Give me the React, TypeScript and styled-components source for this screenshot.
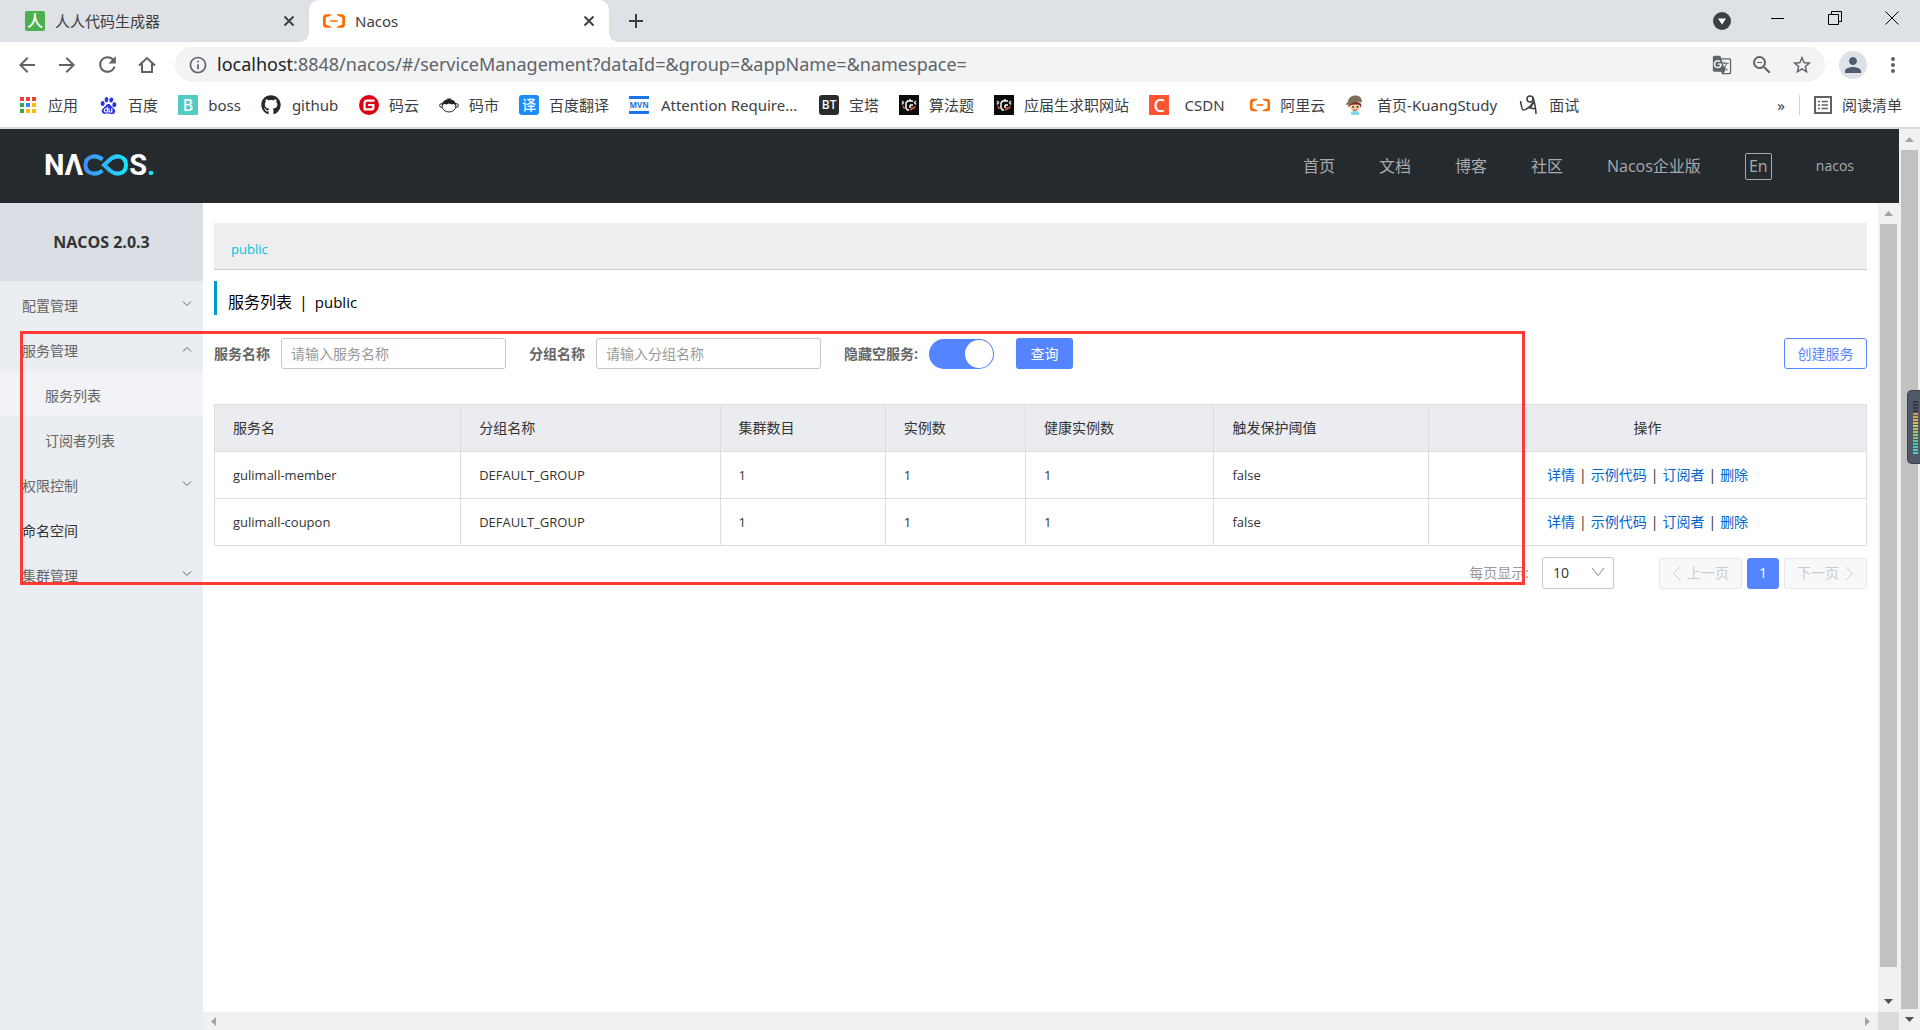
import React, { useState } from "react";
import styled, { createGlobalStyle } from "styled-components";
import {
  MdArrowBack, MdArrowForward, MdRefresh, MdInfoOutline, MdGTranslate,
  MdZoomOut, MdStarBorder, MdPerson, MdMoreVert,
} from "react-icons/md";
import { SiBaidu, SiGitee, SiAlibabacloud } from "react-icons/si";
import { FaGithub } from "react-icons/fa";

const chromeFont = `"Noto Sans", "Noto Sans CJK SC", sans-serif`;
const pageFont = `"Open Sans", "Noto Sans CJK SC", sans-serif`;

const GlobalStyle = createGlobalStyle`
  * { box-sizing: border-box; }
  body { margin: 0; background: #fff; overflow: hidden; }
  button, input, select { font: inherit; margin: 0; }
  button { border: 0; padding: 0; background: none; color: inherit; cursor: pointer; }
  a { text-decoration: none; color: inherit; }
  svg { display: block; flex: none; }
`;

const Window = styled.div`
  position: relative;
  display: flex;
  flex-direction: column;
  height: 100vh;
  font-family: ${pageFont};
`;

/* ---------- browser frame ---------- */

const TabStrip = styled.div`
  display: flex;
  height: 42px;
  background: #dee1e6;
  font: 15px/20px ${chromeFont};
  color: #3c4043;
`;

const Tab = styled.div<{ $active?: boolean }>`
  position: relative;
  display: flex;
  align-items: center;
  gap: 10px;
  width: ${(p) => (p.$active ? 300 : 309)}px;
  padding: 0 13px 0 ${(p) => (p.$active ? 14 : 25)}px;
  background: ${(p) => (p.$active ? "#fff" : "transparent")};
  border-radius: 10px 10px 0 0;
  ${(p) => p.$active && `
    &::before, &::after {
      content: "";
      position: absolute;
      bottom: 0;
      width: 10px;
      height: 10px;
    }
    &::before { left: -10px; background: radial-gradient(circle at 0 0, transparent 10px, #fff 10px); }
    &::after { right: -10px; background: radial-gradient(circle at 100% 0, transparent 10px, #fff 10px); }
  `}
`;

const TabTitle = styled.span`
  flex: 1;
`;

const StripButton = styled.button<{ $w: number }>`
  display: flex;
  align-items: center;
  justify-content: center;
  width: ${(p) => p.$w}px;
`;

const TabClose = styled(StripButton)`
  height: 14px;
`;

const WindowButtons = styled.div`
  display: flex;
  height: 36px;
  margin-left: 7px;
`;

const Spacer = styled.div`
  flex: 1;
`;

const Toolbar = styled.div`
  display: flex;
  align-items: center;
  height: 45px;
  padding: 0 7px;
  color: #5f6368;
`;

const ToolButton = styled.button`
  display: flex;
  align-items: center;
  justify-content: center;
  width: 40px;
  height: 35px;
`;

const AddressBar = styled.div`
  display: flex;
  flex: 1;
  align-items: center;
  height: 35px;
  margin: 0 8px;
  padding: 0 3px 0 13px;
  border-radius: 18px;
  background: #f1f3f4;
`;

const Url = styled.div`
  flex: 1;
  margin-left: 9px;
  padding-bottom: 2px;
  font: 18px/24px ${chromeFont};
  white-space: nowrap;
  b { font-weight: 400; color: #202124; }
`;

const Avatar = styled.span`
  display: flex;
  align-items: center;
  justify-content: center;
  width: 28px;
  height: 28px;
  border-radius: 50%;
  background: #dee1e6;
  color: #4f5b6e;
`;

const BookmarkBar = styled.div`
  display: flex;
  align-items: center;
  gap: 20px;
  height: 42px;
  padding: 0 18px 4px;
  border-bottom: 2px solid #dadce0;
  font: 15px/20px ${chromeFont};
  color: #3c4043;
  white-space: nowrap;
`;

const Bookmark = styled.a`
  display: flex;
  align-items: center;
  gap: 10px;
`;

const BookmarkName = styled.span<{ $w?: number }>`
  min-width: ${(p) => p.$w ?? 0}px;
  text-align: center;
`;

const IconSlot = styled.span`
  display: flex;
  align-items: center;
  justify-content: center;
  width: 20px;
  height: 20px;
`;

const LetterIcon = styled.span<{ $bg: string; $size?: number; $round?: number }>`
  display: flex;
  align-items: center;
  justify-content: center;
  width: 20px;
  height: 20px;
  border-radius: ${(p) => p.$round ?? 0}px;
  background: ${(p) => p.$bg};
  color: #fff;
  font-size: ${(p) => p.$size ?? 15}px;
  font-weight: 500;
  line-height: 20px;
`;

const MvnIcon = styled.span`
  width: 20px;
  border: solid #1a73e8;
  border-width: 3px 0;
  color: #1a73e8;
  font-size: 8px;
  font-weight: 700;
  line-height: 12px;
  text-align: center;
`;

const BarEnd = styled.div`
  display: flex;
  align-items: center;
  gap: 14px;
  color: #3c4043;
`;

const Divider = styled.span`
  width: 1px;
  height: 20px;
  background: #cfd1d4;
`;

const ReadingList = styled.button`
  display: flex;
  align-items: center;
  gap: 10px;
`;

/* ---------- scroll bars ---------- */

const ScrollColumn = styled.div`
  display: flex;
  flex-direction: column;
  flex: none;
  width: 21px;
  background: #f1f1f1;
`;

const ScrollArrow = styled.span`
  display: flex;
  align-items: center;
  justify-content: center;
  width: 21px;
  height: 21px;
`;

const ScrollThumb = styled.div<{ $rest?: number }>`
  flex: 1;
  margin: 0 2px ${(p) => p.$rest ?? 0}px;
  background: #c1c1c1;
`;

const ScrollCorner = styled.div`
  height: 18px;
  background: #dcdcdc;
`;

const ScrollRow = styled.div`
  display: flex;
  align-items: center;
  justify-content: space-between;
  height: 18px;
  background: #f1f1f1;
`;

/* ---------- nacos console ---------- */

const Viewport = styled.div`
  display: flex;
  flex: 1;
  min-height: 0;
`;

const Site = styled.div`
  display: flex;
  flex-direction: column;
  flex: 1;
  min-width: 0;
`;

const Header = styled.header`
  display: flex;
  align-items: center;
  justify-content: space-between;
  height: 74px;
  padding: 0 45px 0 44px;
  background: #252a2f;
`;

const Logo = styled.a`
  display: flex;
  align-items: center;
  padding-bottom: 2px;
  color: #fff;
  font: 700 29px/30px Roboto, sans-serif;
`;

const LogoDot = styled.span`
  color: #1be1f6;
`;

const TopNav = styled.nav`
  display: flex;
  align-items: center;
  gap: 44px;
  color: #a8aaac;
  font-size: 16px;
  line-height: 24px;
`;

const LangButton = styled.button`
  width: 27px;
  height: 27px;
  border: 1px solid #a8aaac;
  border-radius: 2px;
  line-height: 24px;
`;

const UserLink = styled.a`
  font-size: 14px;
`;

const Body = styled.div`
  display: flex;
  flex: 1;
  min-height: 0;
`;

const Sidebar = styled.aside`
  width: 203px;
  flex: none;
  background: #eaedf1;
  font-size: 14px;
  line-height: 20px;
`;

const Brand = styled.h1`
  display: flex;
  align-items: center;
  justify-content: center;
  height: 78px;
  margin: 0;
  background: #d9dde4;
  color: #333;
  font-size: 16px;
  font-weight: 700;
`;

const MenuItem = styled.a<{ $child?: boolean; $active?: boolean; $dark?: boolean }>`
  display: flex;
  align-items: center;
  justify-content: space-between;
  height: 45px;
  padding: 4px 11px 0 ${(p) => (p.$child ? 45 : 22)}px;
  background: ${(p) => (p.$active ? "#f1f3f7" : "transparent")};
  color: ${(p) => (p.$dark ? "#333" : "#666")};
  svg { margin-bottom: 4px; }
`;

const ContentColumn = styled.div`
  display: flex;
  flex-direction: column;
  flex: 1;
  min-width: 0;
`;

const Content = styled.main`
  flex: 1;
  padding: 20px 11px 0;
  font-size: 14px;
  line-height: 20px;
  color: #333;
`;

const NamespaceBar = styled.div`
  display: flex;
  align-items: center;
  height: 47px;
  padding: 5px 17px 0;
  border-bottom: 1px solid #ccc;
  background: #eee;
  color: #00c1de;
  font-size: 13px;
`;

const PageTitle = styled.h2`
  display: flex;
  align-items: center;
  gap: 7px;
  height: 34px;
  margin: 11px 0 23px;
  padding: 8px 0 0 11px;
  border-left: 3px solid #09c;
  color: #000;
  font-size: 16px;
  font-weight: 400;
`;

const TitleNamespace = styled.span`
  font-size: 15px;
`;

const SearchForm = styled.form`
  display: flex;
  align-items: center;
  height: 31px;
  margin-bottom: 35px;
`;

const Label = styled.label`
  margin-right: 11px;
  color: #666;
  font-weight: 700;
`;

const TextInput = styled.input`
  width: 225px;
  height: 31px;
  margin-right: 23px;
  padding: 0 9px;
  border: 1px solid #c4c6cf;
  border-radius: 3px;
  outline: 0;
  &::placeholder { color: #999; opacity: 1; }
`;

const Switch = styled.input`
  appearance: none;
  display: flex;
  justify-content: flex-end;
  width: 65px;
  height: 30px;
  margin-right: 22px;
  padding: 1px;
  border-radius: 15px;
  background: #c4c6cf;
  &::before {
    content: "";
    width: 28px;
    height: 28px;
    margin-right: 35px;
    border-radius: 50%;
    background: #fff;
  }
  &:checked { background: #5584ff; }
  &:checked::before { margin-right: 0; }
`;

const PrimaryButton = styled.button`
  width: 57px;
  height: 31px;
  border-radius: 3px;
  background: #5584ff;
  color: #fff;
`;

const OutlineButton = styled.button`
  width: 83px;
  height: 31px;
  margin-left: auto;
  border: 1px solid #5584ff;
  border-radius: 3px;
  color: #5584ff;
`;

const Table = styled.table`
  width: 100%;
  table-layout: fixed;
  border-collapse: collapse;
`;

const Cell = styled.td<{ $center?: boolean }>`
  height: 47px;
  padding: 0 18px;
  border: 1px solid #dcdee3;
  font-size: ${(p) => (p.$center ? 14 : 13)}px;
  text-align: ${(p) => (p.$center ? "center" : "left")};
`;

const HeadCell = styled(Cell)`
  background: #ebecf0;
  font-size: 14px;
  font-weight: 400;
`;

const ActionLink = styled.a`
  color: #06c;
`;

const Separator = styled.span`
  margin: 0 4px;
`;

const Pager = styled.div`
  display: flex;
  align-items: center;
  justify-content: flex-end;
  gap: 5px;
  margin-top: 11px;
  label { color: #999; margin-right: 8px; }
`;

const SelectBox = styled.span`
  position: relative;
  margin-right: 40px;
  svg { position: absolute; right: 9px; top: 10px; pointer-events: none; }
`;

const Select = styled.select`
  display: block;
  appearance: none;
  width: 72px;
  height: 32px;
  padding: 0 10px;
  border: 1px solid #c4c6cf;
  border-radius: 3px;
  background: #fff;
  color: #333;
`;

const PageButton = styled.button<{ $current?: boolean }>`
  display: flex;
  align-items: center;
  justify-content: center;
  gap: 6px;
  width: ${(p) => (p.$current ? 32 : 83)}px;
  height: 31px;
  border: 1px solid ${(p) => (p.$current ? "#5584ff" : "#e6e7eb")};
  border-radius: 3px;
  background: ${(p) => (p.$current ? "#5584ff" : "#f7f8fa")};
  color: ${(p) => (p.$current ? "#fff" : "#ccc")};
`;

/* ---------- overlays ---------- */

const Highlight = styled.div`
  position: absolute;
  left: 20px;
  top: 331px;
  width: 1505px;
  height: 254px;
  border: 3px solid #ff3a35;
  pointer-events: none;
`;

const Meter = styled.div`
  position: absolute;
  right: 0;
  top: 390px;
  display: flex;
  flex-direction: column;
  justify-content: center;
  gap: 1px;
  width: 13px;
  height: 74px;
  padding-left: 5px;
  border: 1px solid #3a3f4a;
  border-right: 0;
  border-radius: 5px 0 0 5px;
  background: #50586a;
`;

const MeterBar = styled.span<{ $color: string }>`
  width: 5px;
  height: 2px;
  background: ${(p) => p.$color};
`;

/* ---------- icons ---------- */

const Stroke = ({ w, h, d, sw = 1, color = "currentColor" }: { w: number; h: number; d: string; sw?: number; color?: string }) => (
  <svg width={w} height={h} viewBox={`0 0 ${w} ${h}`} fill="none" stroke={color} strokeWidth={sw}>
    <path d={d} />
  </svg>
);

const Cross = () => <Stroke w={12} h={12} sw={2} d="M1.5 1.5l9 9M10.5 1.5l-9 9" />;

const Triangle = ({ dir, color }: { dir: "up" | "down" | "left" | "right"; color: string }) => {
  const points = { up: "0,7 4.5,2 9,7", down: "0,2 4.5,7 9,2", left: "7,0 2,4.5 7,9", right: "2,0 7,4.5 2,9" }[dir];
  return <svg width="9" height="9"><polygon points={points} fill={color} /></svg>;
};

const AppsIcon = () => {
  const colors = ["#ea4335", "#ea4335", "#ea4335", "#34a853", "#4285f4", "#fbbc05", "#34a853", "#fbbc05", "#fbbc05"];
  return (
    <svg width="18" height="18">
      {colors.map((c, i) => <rect key={i} x={(i % 3) * 6 + 1} y={Math.floor(i / 3) * 6 + 1} width="4" height="4" fill={c} />)}
    </svg>
  );
};

const MonkeyIcon = () => (
  <svg width="20" height="20" viewBox="0 0 20 20">
    <circle cx="2.4" cy="10.500" r="1.8" fill="#fff" stroke="#222" />
    <circle cx="17.6" cy="10.500" r="1.8" fill="#fff" stroke="#222" />
    <ellipse cx="10" cy="11" rx="7" ry="6" fill="#fff" stroke="#222" />
    <path d="M3 11C3 6.500 6 4.600 9 4.600L8 3l2.400.8L12 2.600l-.6 2C15 5 17 7 17 11c-1-2-3-2.600-4.500-1.500L10 8.500 7.500 9.500C6 8.400 4 9 3 11z" fill="#222" />
  </svg>
);

const CodeIcon = () => (
  <svg width="20" height="20" viewBox="0 0 20 20" fill="none" strokeWidth="1.5">
    <rect width="20" height="20" fill="#0b0b0b" />
    <path d="M14 6H8.500L7 8v5l1.500 2H10" stroke="#fff" />
    <path d="M11 4v2M11 10h3M11 10v3" stroke="#fff" />
    <path d="M3 6l1.500 1.500L3 9.500M17 6l-1.500 1.500L17 9.500" stroke="#ddd" />
    <path d="M4 11l1.500 3M16 11l-1.500 3M13 12v2l-2 1" stroke="#e2664a" />
  </svg>
);

const BoyIcon = () => (
  <svg width="20" height="20" viewBox="0 0 20 20">
    <path d="M6 20v-3l2.500-1.500h3L14 17v3z" fill="#7fdcf0" />
    <circle cx="10" cy="11.500" r="5" fill="#f6c7a4" />
    <path d="M3.500 12.500C3 9 4 7 10 7s7 2 6 6l-1.500-3C12 9.500 8 9 5.500 10z" fill="#7a2f22" />
    <path d="M3 7c0-4 3.500-6.500 7.500-6.500S17 3 17 7.500C13 6 9 7 6 9L1 10C1 8 2 7.500 3 7z" fill="#7d6f5a" />
    <path d="M8 14.500c1 1 3 1 4 0" stroke="#c0392b" fill="none" />
    <circle cx="8" cy="12" r=".9" fill="#333" /><circle cx="12.500" cy="12" r=".9" fill="#333" />
  </svg>
);

const SketchIcon = () => (
  <svg width="20" height="20" viewBox="0 0 20 20" fill="none" stroke="#3c3c3c" strokeWidth="1.5">
    <path d="M1.500 6c1 5 1 9 3 9s7-3 10-8" />
    <circle cx="11" cy="4" r="3" />
    <path d="M14 2c1 4 3 10 3 17M17 14l-6-1 4-6" />
  </svg>
);

const ListIcon = () => (
  <svg width="18" height="18" viewBox="0 0 18 18" fill="none" stroke="#5f6368" strokeWidth="2">
    <path d="M1 1h16v16H1z" />
    <path strokeWidth="1.5" d="M4 5.500h2M4 9h2M4 12.500h2M7.500 5.500H14M7.500 9H14M7.500 12.500H14" />
  </svg>
);

const InfinityLogo = () => (
  <svg width="46" height="22" viewBox="0 0 46 22" fill="none" strokeWidth="4">
    <defs>
      <linearGradient id="loop" gradientUnits="userSpaceOnUse" x1="0" y1="0" x2="46" y2="0">
        <stop offset="0" stopColor="#4289fd" />
        <stop offset="1" stopColor="#17eaf8" />
      </linearGradient>
    </defs>
    <path stroke="url(#loop)" d="M19.500 16.500C13 22 2.500 20 2.500 11S13 0 19.500 5.500M21 11l6-5.500C33.500 0 43 2 43 11s-9.500 11-16 5.500z" />
  </svg>
);

/* ---------- data ---------- */

const bookmarks: { name: string; icon: React.ReactNode; width?: number }[] = [
  { name: "应用", icon: <IconSlot><AppsIcon /></IconSlot> },
  { name: "百度", icon: <IconSlot><SiBaidu size={17} color="#2932e1" /></IconSlot> },
  { name: "boss", icon: <LetterIcon $bg="#53cac3" $size={16}>B</LetterIcon>, width: 33 },
  { name: "github", icon: <FaGithub size={20} color="#24292e" />, width: 48 },
  { name: "码云", icon: <SiGitee size={20} color="#dd0011" /> },
  { name: "码市", icon: <MonkeyIcon /> },
  { name: "百度翻译", icon: <LetterIcon $bg="#1a8cff" $round={3} $size={14}>译</LetterIcon> },
  { name: "Attention Require...", icon: <MvnIcon>MVN</MvnIcon>, width: 140 },
  { name: "宝塔", icon: <LetterIcon $bg="#2b2b2b" $round={3} $size={12}>BT</LetterIcon> },
  { name: "算法题", icon: <CodeIcon /> },
  { name: "应届生求职网站", icon: <CodeIcon /> },
  { name: "CSDN", icon: <LetterIcon $bg="#fc5531" $size={18}>C</LetterIcon>, width: 51 },
  { name: "阿里云", icon: <SiAlibabacloud size={20} color="#ff6a00" /> },
  { name: "首页-KuangStudy", icon: <BoyIcon />, width: 124 },
  { name: "面试", icon: <SketchIcon /> },
];

const menu: { name: string; arrow?: "up" | "down"; child?: boolean; active?: boolean; dark?: boolean }[] = [
  { name: "配置管理", arrow: "down" },
  { name: "服务管理", arrow: "up" },
  { name: "服务列表", child: true, active: true },
  { name: "订阅者列表", child: true },
  { name: "权限控制", arrow: "down" },
  { name: "命名空间", dark: true },
  { name: "集群管理", arrow: "down" },
];

const columns: [string, string][] = [
  ["服务名", "14.9%"], ["分组名称", "15.7%"], ["集群数目", "10%"], ["实例数", "8.5%"],
  ["健康实例数", "11.4%"], ["触发保护阈值", "13%"],
];

const services = [
  ["gulimall-member", "DEFAULT_GROUP", "1", "1", "1", "false"],
  ["gulimall-coupon", "DEFAULT_GROUP", "1", "1", "1", "false"],
];

const actions = ["详情", "示例代码", "订阅者", "删除"];

const meterColors = [
  "#343a45", "#343a45", "#343a45", "#343a45", "#e0913f", "#dfa04a", "#d9b04c", "#d6c04e", "#cfc956", "#bcc95c",
  "#a9c964", "#93c76c", "#7dc678", "#66c58a", "#52c79e", "#48cbb0", "#45d0c0", "#45d0c0",
];

export default function App() {
  const [hideEmpty, setHideEmpty] = useState(true);

  return (
    <Window>
      <GlobalStyle />
      <TabStrip>
        <Tab>
          <LetterIcon $bg="#4caf50" $round={2} $size={16}>人</LetterIcon>
          <TabTitle>人人代码生成器</TabTitle>
          <TabClose $w={14} aria-label="close tab"><Cross /></TabClose>
        </Tab>
        <Tab $active>
          <SiAlibabacloud size={22} color="#ff6a00" />
          <TabTitle>Nacos</TabTitle>
          <TabClose $w={14} aria-label="close tab"><Cross /></TabClose>
        </Tab>
        <StripButton $w={54} aria-label="new tab"><Stroke w={14} h={14} sw={2} d="M7 0v14M0 7h14" /></StripButton>
        <Spacer />
        <StripButton $w={40} aria-label="tab search">
          <svg width="18" height="18"><circle cx="9" cy="9" r="9" fill="#3c4043" /><path d="M5 6.500h8L9 12.500z" fill="#fff" /></svg>
        </StripButton>
        <WindowButtons>
          <StripButton $w={57} aria-label="minimize"><Stroke w={13} h={13} d="M0 6.500h13" color="#000" /></StripButton>
          <StripButton $w={57} aria-label="restore"><Stroke w={14} h={14} d="M.5 3.500h10v10H.5zM3.500 3V.5h10v10H11" color="#000" /></StripButton>
          <StripButton $w={57} aria-label="close"><Stroke w={14} h={14} d="M.5.5l13 13M13.500.5l-13 13" color="#000" /></StripButton>
        </WindowButtons>
      </TabStrip>
      <Toolbar>
        <ToolButton aria-label="back"><MdArrowBack size={24} /></ToolButton>
        <ToolButton aria-label="forward"><MdArrowForward size={24} /></ToolButton>
        <ToolButton aria-label="reload"><MdRefresh size={25} /></ToolButton>
        <ToolButton aria-label="home"><Stroke w={18} h={18} sw={2} d="M1 9.500L9 2l8 7.500M4 7.500V16h10V7.500" /></ToolButton>
        <AddressBar>
          <MdInfoOutline size={20} />
          <Url><b>localhost</b>:8848/nacos/#/serviceManagement?dataId=&amp;group=&amp;appName=&amp;namespace=</Url>
          <ToolButton aria-label="translate"><MdGTranslate size={20} /></ToolButton>
          <ToolButton aria-label="zoom"><MdZoomOut size={24} /></ToolButton>
          <ToolButton aria-label="bookmark"><MdStarBorder size={22} /></ToolButton>
        </AddressBar>
        <ToolButton aria-label="profile"><Avatar><MdPerson size={24} /></Avatar></ToolButton>
        <ToolButton aria-label="menu"><MdMoreVert size={24} /></ToolButton>
      </Toolbar>
      <BookmarkBar>
        {bookmarks.map((b) => (
          <Bookmark href="#" key={b.name}>{b.icon}<BookmarkName $w={b.width}>{b.name}</BookmarkName></Bookmark>
        ))}
        <Spacer />
        <BarEnd>
          <button>»</button>
          <Divider />
          <ReadingList><ListIcon />阅读清单</ReadingList>
        </BarEnd>
      </BookmarkBar>

      <Viewport>
        <Site>
          <Header>
            <Logo href="#" aria-label="NACOS"><span>N</span><span>Λ</span><InfinityLogo /><span>S</span><LogoDot>.</LogoDot></Logo>
            <TopNav>
              <a href="#">首页</a>
              <a href="#">文档</a>
              <a href="#">博客</a>
              <a href="#">社区</a>
              <a href="#">Nacos企业版</a>
              <LangButton>En</LangButton>
              <UserLink href="#">nacos</UserLink>
            </TopNav>
          </Header>
          <Body>
            <Sidebar>
              <Brand>NACOS 2.0.3</Brand>
              {menu.map((m) => (
                <MenuItem href="#" key={m.name} $child={m.child} $active={m.active} $dark={m.dark}>
                  {m.name}
                  {m.arrow && <Stroke w={10} h={6} d={m.arrow === "down" ? "M1 .5l4 4 4-4" : "M1 5.500l4-4 4 4"} />}
                </MenuItem>
              ))}
            </Sidebar>
            <ContentColumn>
              <Content>
                <NamespaceBar><a href="#">public</a></NamespaceBar>
                <PageTitle>服务列表<span>|</span><TitleNamespace>public</TitleNamespace></PageTitle>
                <SearchForm onSubmit={(e) => e.preventDefault()}>
                  <Label htmlFor="service">服务名称</Label>
                  <TextInput id="service" placeholder="请输入服务名称" />
                  <Label htmlFor="group">分组名称</Label>
                  <TextInput id="group" placeholder="请输入分组名称" />
                  <Label htmlFor="hide">隐藏空服务:</Label>
                  <Switch id="hide" type="checkbox" checked={hideEmpty} onChange={(e) => setHideEmpty(e.target.checked)} />
                  <PrimaryButton type="submit">查询</PrimaryButton>
                  <OutlineButton type="button">创建服务</OutlineButton>
                </SearchForm>
                <Table>
                  <colgroup>
                    {columns.map(([name, width]) => <col key={name} style={{ width }} />)}
                    <col />
                  </colgroup>
                  <thead>
                    <tr>
                      {columns.map(([name]) => <HeadCell as="th" key={name}>{name}</HeadCell>)}
                      <HeadCell as="th" $center>操作</HeadCell>
                    </tr>
                  </thead>
                  <tbody>
                    {services.map((row) => (
                      <tr key={row[0]}>
                        {row.map((value, i) => <Cell key={i}>{value}</Cell>)}
                        <Cell $center>
                          {actions.map((a, i) => (
                            <React.Fragment key={a}>
                              {i > 0 && <Separator>|</Separator>}
                              <ActionLink href="#">{a}</ActionLink>
                            </React.Fragment>
                          ))}
                        </Cell>
                      </tr>
                    ))}
                  </tbody>
                </Table>
                <Pager>
                  <label htmlFor="size">每页显示:</label>
                  <SelectBox>
                    <Select id="size" defaultValue="10"><option>10</option><option>20</option></Select>
                    <Stroke w={14} h={10} d="M1 1l6 7.500L13 1" color="#888" />
                  </SelectBox>
                  <PageButton disabled><Stroke w={9} h={15} d="M8 1L1.500 7.500 8 14" />上一页</PageButton>
                  <PageButton $current>1</PageButton>
                  <PageButton disabled>下一页<Stroke w={9} h={15} d="M1 1l6.500 6.500L1 14" /></PageButton>
                </Pager>
              </Content>
              <ScrollRow>
                <ScrollArrow><Triangle dir="left" color="#a3a3a3" /></ScrollArrow>
                <ScrollArrow><Triangle dir="right" color="#a3a3a3" /></ScrollArrow>
              </ScrollRow>
            </ContentColumn>
            <ScrollColumn>
              <ScrollArrow><Triangle dir="up" color="#a3a3a3" /></ScrollArrow>
              <ScrollThumb $rest={24} />
              <ScrollArrow><Triangle dir="down" color="#505050" /></ScrollArrow>
              <ScrollCorner />
            </ScrollColumn>
          </Body>
        </Site>
        <ScrollColumn>
          <ScrollArrow><Triangle dir="up" color="#a3a3a3" /></ScrollArrow>
          <ScrollThumb />
          <ScrollArrow><Triangle dir="down" color="#505050" /></ScrollArrow>
        </ScrollColumn>
      </Viewport>

      <Highlight />
      <Meter>{meterColors.map((c, i) => <MeterBar key={i} $color={c} />)}</Meter>
    </Window>
  );
}
